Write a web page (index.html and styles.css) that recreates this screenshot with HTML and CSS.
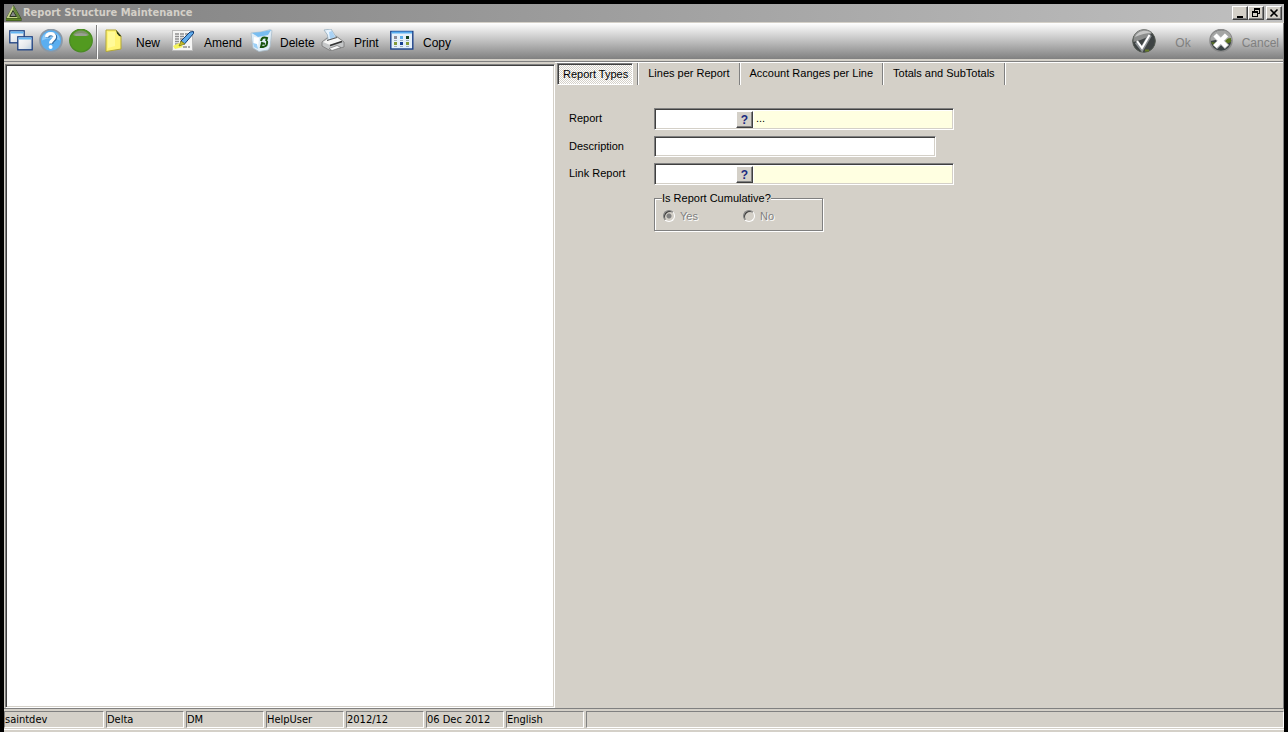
FILE: index.html
```html
<!DOCTYPE html>
<html lang="en">
<head>
<meta charset="utf-8">
<title>Report Structure Maintenance</title>
<link rel="stylesheet" href="styles.css">
</head>
<body>
<div class="window">
  <header class="titlebar">
    <svg class="app-icon" width="18" height="18" viewBox="0 0 18 18"><path d="M8.500 1L16.500 14.500V17H1V14Z" fill="#32481c"/><path d="M8 1.500L1.500 14H15Z" fill="#c6d48a"/><path d="M8.500 1.500L15.500 14H12.500L8 5Z" fill="#628538"/><path d="M1 15.500h15" stroke="#5f8425" stroke-width="2"/><path d="M8 6.500L11.500 12.500H4.800Z" fill="#858585" stroke="#26341a"/></svg>
    <h1 class="title">Report Structure Maintenance</h1>
    <div class="window-controls">
      <button class="win-btn" aria-label="Minimize"><svg width="12" height="10" viewBox="0 0 12 10" shape-rendering="crispEdges"><path d="M3 8h6v2H3z"/></svg></button>
      <button class="win-btn" aria-label="Restore"><svg width="12" height="10" viewBox="0 0 12 10" shape-rendering="crispEdges"><path d="M4 0h6v6H8V5h1V2H5v1H4zM2 3h6v6H2zM3 5v3h4V5z" fill-rule="evenodd"/></svg></button>
      <button class="win-btn win-close" aria-label="Close"><svg width="12" height="10" viewBox="0 0 12 10"><path d="M2.500 1.500L9.500 8.500M9.500 1.500L2.500 8.500" stroke="#000" stroke-width="1.600"/></svg></button>
    </div>
  </header>

  <nav class="toolbar" aria-label="Actions">
    <div class="quick">
      <button class="icon-btn" aria-label="Windows"><svg width="24" height="24" viewBox="0 0 24 24"><defs><linearGradient id="pane" x2="1" y2="1"><stop offset="0" stop-color="#fff"/><stop offset=".6" stop-color="#e6e9ec"/><stop offset="1" stop-color="#b9cfe2"/></linearGradient></defs><rect x=".8" y="1.800" width="14.400" height="12" fill="url(#pane)" stroke="#1c3f80" stroke-width="1.300"/><path d="M1.500 3.500h13" stroke="#62b4f2" stroke-width="2"/><rect x="8.800" y="7.800" width="14.400" height="13" fill="url(#pane)" stroke="#1c3f80" stroke-width="1.300"/><path d="M9.500 9.500h13" stroke="#62b4f2" stroke-width="2"/></svg></button>
      <button class="icon-btn" aria-label="Help"><svg width="24" height="24" viewBox="0 0 24 24"><circle cx="12" cy="11.500" r="11" fill="#5aaef0" stroke="#8b98a5" stroke-width="1.700"/><path d="M3 11.500C3 0 21 0 21 11.500Q12 7 3 11.500Z" fill="#8dcaf8"/><path d="M8.500 8.500C9 4.500 17 4.500 16.500 8.500C16 12 12.500 11 12.500 15" fill="none" stroke="#316ba2" stroke-width="3.500"/><path d="M7.500 8C8 3.500 16 3.500 15.500 8C15 11.500 11.500 10.500 11.500 14.500" fill="none" stroke="#fff" stroke-width="3.200"/><circle cx="11.600" cy="18" r="2" fill="#fff"/></svg></button>
      <button class="icon-btn" aria-label="Status"><svg width="24" height="24" viewBox="0 0 24 24"><circle cx="12" cy="11.500" r="11.300" fill="#529a20" stroke="#488a22" stroke-width="1.200"/><path d="M4 6C7 0 17 0 20 6Q12 3 4 6Z" fill="#7c9168"/><path d="M4 6Q12 2 20 6L17 7H7Z" fill="#999f92"/></svg></button>
    </div>
    <div class="actions">
      <button class="tool-btn tool-new"><svg width="24" height="24" viewBox="0 0 24 24"><path d="M4 1H14L19 7V20L4 22.500Z" fill="#fff475" stroke="#b3a735"/><path d="M6 3h7v14l-7 2z" fill="#fffa98"/><path d="M14 1L19.500 7.500Q16 7 15 4.500Z" fill="#26351b"/></svg><span>New</span></button>
      <button class="tool-btn"><svg width="24" height="24" viewBox="0 0 24 24"><rect x="1.500" y="1.500" width="20" height="20" fill="#f5f5f4" stroke="#b9b9b9"/><path d="M4 5h14M4 7.500h12M4 10h10M4 12.500h8M4 15h6M12 18h7" stroke="#8e8e8e" stroke-width="1.300" stroke-dasharray="4 1"/><path d="M2 17l6-3 4 4-8 2z" fill="#f5f45d"/><path d="M10 12L19 3l3.500-.5v2L13.500 15z" fill="#60aced" stroke="#123b73"/><path d="M10 12l4 3-6 2z" fill="#c8bc28" stroke="#73751c" stroke-width=".7"/></svg><span>Amend</span></button>
      <button class="tool-btn tool-delete"><svg width="24" height="24" viewBox="0 0 24 24"><path d="M1 4L11 3 20 .7 22 1.500 20 18 18 21 9 22.500 3 19Z" fill="#dfedf7" stroke="#aabcca" stroke-width=".8"/><path d="M2 4l9-1 10-2-3 5-10 2z" fill="#78bdf1"/><path d="M4 8l5 1-1 9-4-2z" fill="#fff"/><path d="M3 14l4 1 1 5-4-2z" fill="#9cd0f7"/><path d="M11 12q1-5 6-3l-1 3M17 12q1 5-4 6M14 18h-3l1-4 3 1" fill="none" stroke="#17540d" stroke-width="2"/></svg><span>Delete</span></button>
      <button class="tool-btn"><svg width="24" height="24" viewBox="0 0 24 24"><path d="M1 13l5-4 9-2 8 6v5L9 21.500 1 17z" fill="#c5c7c8" stroke="#777" stroke-width=".8"/><path d="M2 13l5-3 8-2 6 4-12 4z" fill="#f6f6f5"/><path d="M3 1l7-1 5 8-8 3q1-5-4-10Z" fill="#e7f3fe" stroke="#98aebe" stroke-width=".8"/><path d="M8 3l3-1 3 6-5 2z" fill="#a9d2f5"/><path d="M6 11.500l10-3" stroke="#555"/><path d="M9 16.500l12-4" stroke="#333" stroke-width="1.800"/><path d="M8 19.500l8-3 4 2-9 3z" fill="#fafafa" stroke="#737373" stroke-width=".7"/></svg><span>Print</span></button>
      <button class="tool-btn"><svg width="24" height="24" viewBox="0 0 24 24"><rect x=".8" y="2.500" width="22" height="17.500" fill="#e5f0fa" stroke="#1b4088" stroke-width="1.400"/><path d="M1.500 3.500h20.600" stroke="#58aef0" stroke-width="2"/><path d="M4 7h3v3H4z" fill="#8c8c98"/><path d="M10 7h3v3h-3z" fill="#58adeb"/><path d="M16 7h3v3h-3z" fill="#14421f"/><path d="M4 13h3v3H4zM16 13h3v3h-3z" fill="#839a38"/><path d="M10 13h3v3h-3z" fill="#173f91"/><path d="M4 11.500h3m3 0h3m3 0h3M4 17.500h3m3 0h3m3 0h3" stroke="#9fafbd"/></svg><span>Copy</span></button>
    </div>
    <div class="confirm">
      <button class="tool-btn tool-ok" disabled><svg width="24" height="24" viewBox="0 0 24 24"><circle cx="12" cy="12" r="11.300" fill="#3e4344" stroke="#50564e"/><path d="M1.500 13C0 0 15-3 20 4Q15 10 1.500 13Z" fill="#8c8e8d"/><path d="M3 8C6 1 15 0 19 4Q12 4 3 8Z" fill="#c6c7c6"/><path d="M4.500 13l5.500 7 8-14" fill="none" stroke="#8b9094" stroke-width="4"/><path d="M5 12l5 7 7.500-13" fill="none" stroke="#fff" stroke-width="2"/><path d="M13 21.500h4" stroke="#667d28" stroke-width="2"/></svg><span>Ok</span></button>
      <button class="tool-btn tool-cancel" disabled><svg width="24" height="24" viewBox="0 0 24 24"><circle cx="12" cy="11.500" r="11" fill="#3b4446" stroke="#8a8a8a" stroke-width="1.500"/><path d="M1.500 12C1-2 23-2 22.500 11Q12 9 1.500 12Z" fill="#a5a6a5"/><path d="M15 10l7-1v4l-5 2zM2 13l6 1-3 3z" fill="#5a7520"/><path d="M6 6l12 12M18 6L6 18" stroke="#b1b3b5" stroke-width="6"/><path d="M6 6l11.500 11.500M17.500 6L6 17.500" stroke="#fff" stroke-width="4.500"/></svg><span>Cancel</span></button>
    </div>
  </nav>

  <main class="content">
    <section class="tree" aria-label="Report structure"></section>
    <section class="details">
      <div class="tabs" role="tablist">
        <button class="tab tab-active" role="tab" aria-selected="true">Report Types</button>
        <button class="tab" role="tab">Lines per Report</button>
        <button class="tab" role="tab">Account Ranges per Line</button>
        <button class="tab" role="tab">Totals and SubTotals</button>
      </div>
      <form class="form">
        <label for="report">Report</label>
        <div class="field lookup"><input id="report" type="text"><button class="lookup-btn" type="button" aria-label="Look up report">?</button><output class="lookup-name" for="report">...</output></div>
        <label for="description">Description</label>
        <input class="field description" id="description" type="text">
        <label for="link">Link Report</label>
        <div class="field lookup"><input id="link" type="text"><button class="lookup-btn" type="button" aria-label="Look up link report">?</button><output class="lookup-name" for="link"></output></div>
        <fieldset class="cumulative" disabled>
          <legend>Is Report Cumulative?</legend>
          <label class="option"><input type="radio" name="cumulative" checked>Yes</label>
          <label class="option"><input type="radio" name="cumulative">No</label>
        </fieldset>
      </form>
    </section>
  </main>

  <footer class="statusbar">
    <span class="cell cell-server">saintdev</span>
    <span class="cell">Delta</span>
    <span class="cell">DM</span>
    <span class="cell">HelpUser</span>
    <span class="cell">2012/12</span>
    <span class="cell">06 Dec 2012</span>
    <span class="cell">English</span>
    <span class="cell cell-rest"></span>
  </footer>
</div>
</body>
</html>
```
FILE: styles.css
```css
* { box-sizing: border-box; }

body {
  margin: 0;
  background: #000;
  color: #000;
  font: 11px/14px "Liberation Sans", Arial, sans-serif;
}

button, input { font: inherit; color: inherit; }
button { padding: 0; border: 0; background: none; }
svg { display: block; flex: none; }

.window {
  display: flex;
  flex-direction: column;
  height: 100vh;
  padding: 4px 4px 0;
}

.titlebar {
  display: flex;
  align-items: center;
  height: 19px;
  padding: 0 2px 0 1px;
  border-bottom: 1px solid #d4d0c8;
  background: linear-gradient(90deg, #808080, #c0c0c0);
}

.title {
  flex: 1;
  margin: 0;
  color: #d4d0c8;
  font: bold 11px/18px "DejaVu Sans Condensed", Tahoma, sans-serif;
}

.window-controls { display: flex; }

.win-btn {
  display: grid;
  place-items: center;
  width: 16px;
  height: 14px;
  border: 1px solid;
  border-color: #fff #404040 #404040 #fff;
  background: #d4d0c8;
  box-shadow: inset -1px -1px #808080;
}

.win-close { margin-left: 2px; }

.toolbar {
  display: flex;
  height: 39px;
  padding: 0 0 2px 2px;
  border-bottom: 1px solid #808080;
  border-right: 1px solid #808080;
  background: linear-gradient(#fff, #808080 36px, #d4d0c8 36px);
  font-size: 12px;
}

.quick {
  display: flex;
  align-items: center;
  gap: 6px;
  margin-top: 2px;
  padding: 0 4px 2px 3px;
  border-right: 1px solid #fff;
  box-shadow: inset -1px 0 #808080;
}

.actions {
  display: grid;
  grid-template-columns: 69px 79px 71px 69px 70px;
  margin-left: 4px;
}

.tool-btn {
  display: flex;
  align-items: center;
  gap: 9px;
}

.tool-btn span { padding-top: 3px; }
.tool-new { gap: 10px; }
.tool-delete { gap: 6px; }

.confirm {
  display: flex;
  gap: 18px;
  margin-left: auto;
  padding-right: 4px;
}

.confirm .tool-btn { color: #808080; }
.tool-ok { gap: 19px; }

.content {
  display: flex;
  flex: 1;
  min-height: 0;
  border-right: 1px solid #808080;
  background: #d4d0c8;
}

.tree {
  width: 43%;
  margin: 2px 0 0 1px;
  border: 1px solid;
  border-color: #808080 #fff #fff #808080;
  background: #fff;
  box-shadow: inset 1px 1px #404040, inset -1px -1px #d4d0c8;
}

.details {
  flex: 1;
  min-width: 0;
  border-top: 1px solid #fff;
}

.tabs { display: flex; padding-left: 2px; }

.tab {
  height: 22px;
  padding: 0 10px 2px 9px;
  border-right: 1px solid #fff;
  box-shadow: inset -1px 0 #808080;
  white-space: nowrap;
}

.tab-active {
  margin-right: 6px;
  padding: 0 4px 0 5px;
  border: 1px solid;
  border-color: #808080 #fff #fff #808080;
  background: repeating-conic-gradient(#fff 0 25%, #d4d0c8 0 50%) 0 0 / 2px 2px;
  box-shadow: inset 1px 1px #404040, 4px 0 #d4d0c8, 5px 0 #808080, 6px 0 #fff;
}

.form {
  display: grid;
  grid-template-columns: 85px 300px;
  row-gap: 6px;
  margin: 23px 0 0 14px;
}

.form > label { padding-top: 3px; }

.field {
  height: 22px;
  padding: 0;
  border: 1px solid;
  border-color: #808080 #fff #fff #808080;
  border-radius: 0;
  background: #fff;
  box-shadow: inset 1px 1px #404040, inset -1px -1px #d4d0c8;
}

.lookup { display: flex; padding: 1px; }

.lookup input {
  width: 79px;
  margin: 1px 0 0 1px;
  padding: 0;
  border: 0;
  outline: 0;
  background: #fff;
}

.lookup-btn {
  width: 17px;
  margin-top: 1px;
  border: 1px solid;
  border-color: #fff #404040 #404040 #fff;
  background: #d4d0c8;
  box-shadow: inset -1px -1px #808080;
  color: #1a2a80;
  font-size: 12px;
  font-weight: bold;
}

.lookup-name {
  flex: 1;
  margin: 1px 0 0 1px;
  padding-left: 2px;
  background: #ffffe1;
}

.description { width: 282px; height: 21px; }

.cumulative {
  grid-column: 2;
  display: flex;
  width: 169px;
  height: 40px;
  min-width: 0;
  margin: 0;
  padding: 4px 8px;
  border: 1px solid #808080;
  box-shadow: 1px 1px #fff, inset 1px 1px #fff;
}

.cumulative legend {
  padding: 0;
  margin-left: -1px;
  background: #d4d0c8;
}

.option {
  display: flex;
  flex: none;
  gap: 5px;
  width: 80px;
  color: #808080;
  text-shadow: 1px 1px #fff;
}

.option input {
  appearance: none;
  width: 12px;
  height: 12px;
  margin: 1px 0;
  border: 1px solid;
  border-color: #808080 #fff #fff #808080;
  border-radius: 50%;
  background: #d4d0c8;
  box-shadow: inset 1px 1px #404040;
}

.option input:checked {
  background: radial-gradient(circle, #808080 2px, #d4d0c8 3px);
}

.statusbar {
  display: flex;
  gap: 2px;
  height: 24px;
  padding: 2px 0 4px;
  border-top: 1px solid #808080;
  background: linear-gradient(#d4d0c8 20px, #fff 20px, #fff 21px, #d4d0c8 21px);
  font: 11px/16px "DejaVu Sans Condensed", Tahoma, sans-serif;
}

.cell {
  width: 78px;
  border: 1px solid;
  border-color: #808080 #fff #fff #808080;
  white-space: nowrap;
}

.cell-server { width: 100px; }
.cell-rest { flex: 1; }
```
